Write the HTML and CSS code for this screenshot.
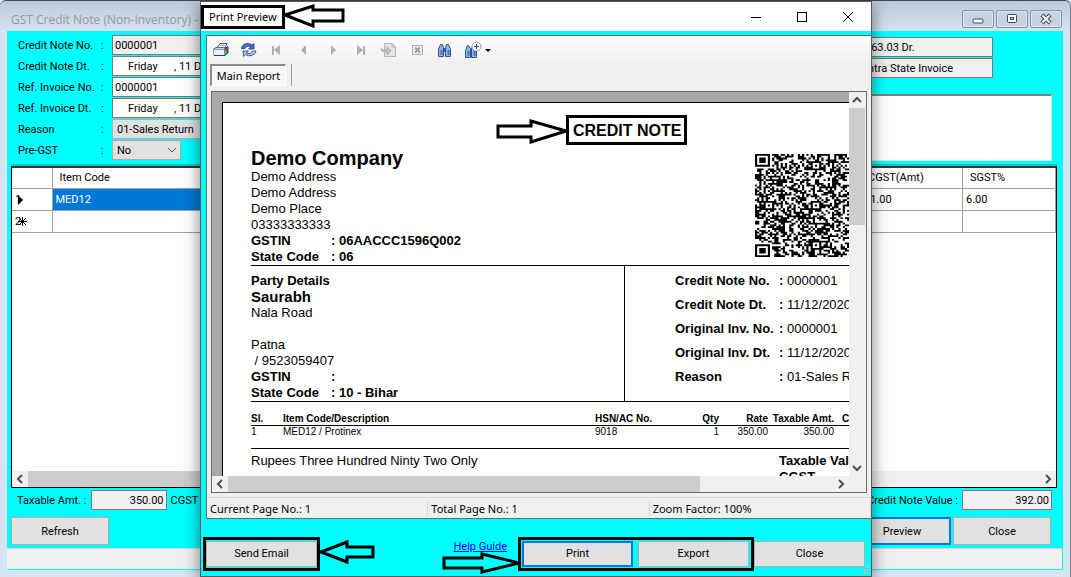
FILE: index.html
```html
<!DOCTYPE html>
<html lang="en">
<head>
    <meta charset="UTF-8">
    <meta name="viewport" content="width=device-width, initial-scale=1.0">
    <title>GST Credit Note - Print Preview</title>
    <link rel="stylesheet" href="styles.css">
</head>
<body>

    <!-- Credit note form (behind) -->
    <main class="form-window">
        <header class="form-title">
            <span>GST Credit Note (Non-Inventory) - T</span>
            <div class="window-buttons">
                <button aria-label="Minimize form"><svg width="14" height="12"><rect x="2" y="6" width="10" height="4" rx="1" fill="#fff" stroke="#44475a"/></svg></button>
                <button aria-label="Restore form"><svg width="14" height="12"><rect x="2.5" y="1.500" width="9" height="8" rx="1" fill="#fff" stroke="#44475a"/><rect x="5.500" y="4.500" width="3" height="2" fill="#c4d2e2" stroke="#44475a"/></svg></button>
                <button aria-label="Close form"><svg width="14" height="12"><path d="M3 2 L11 10 M11 2 L3 10" stroke="#44475a" stroke-width="4"/><path d="M3.500 2.500 L10.500 9.500 M10.500 2.500 L3.500 9.500" stroke="#fff" stroke-width="2"/></svg></button>
            </div>
        </header>

        <div class="form-body">
            <div class="form-top">
                <div class="fields">
                    <label for="cnNo">Credit Note No.</label><span>:</span>
                    <input id="cnNo" class="readonly" value="0000001" readonly>
                    <label for="cnDate">Credit Note Dt.</label><span>:</span>
                    <input id="cnDate" class="date" value="Friday      , 11 December">
                    <label for="refNo">Ref. Invoice No.</label><span>:</span>
                    <input id="refNo" value="0000001">
                    <label for="refDate">Ref. Invoice Dt.</label><span>:</span>
                    <input id="refDate" class="date" value="Friday      , 11 December">
                    <label for="reason">Reason</label><span>:</span>
                    <select id="reason"><option>01-Sales Return</option></select>
                    <label for="preGst">Pre-GST</label><span>:</span>
                    <div class="small-select">
                        <select id="preGst"><option>No</option></select>
                        <svg width="10" height="6"><path d="M1 1 L5 5 L9 1" fill="none" stroke="#555"/></svg>
                    </div>
                </div>
                <div class="party">
                    <input class="readonly" aria-label="Balance" value="963.03 Dr." readonly>
                    <input class="readonly" aria-label="Invoice type" value="Intra State Invoice" readonly>
                    <textarea aria-label="Remarks"></textarea>
                </div>
            </div>

            <div class="items">
                <table>
                    <colgroup><col class="col-mark"><col><col class="col-cgst"><col class="col-sgst"></colgroup>
                    <thead>
                        <tr><th></th><th>Item Code</th><th>CGST(Amt)</th><th>SGST%</th></tr>
                    </thead>
                    <tbody>
                        <tr><td class="mark">1<svg width="6" height="10"><path d="M0 0 L5 5 L0 10z"/></svg></td><td class="selected">MED12</td><td>21.00</td><td>6.00</td></tr>
                        <tr><td class="mark">2<svg width="9" height="9"><path d="M4.500 0v9M0 4.500h9M1 1l7 7M8 1l-7 7" stroke="#000"/></svg></td><td></td><td></td><td></td></tr>
                    </tbody>
                </table>
                <div class="hscroll">
                    <svg width="16" height="16"><path d="M10 4 L6 8 L10 12" fill="none" stroke="#505050" stroke-width="2"/></svg>
                    <div class="thumb"></div>
                    <svg width="16" height="16"><path d="M6 4 L10 8 L6 12" fill="none" stroke="#505050" stroke-width="2"/></svg>
                </div>
            </div>

            <div class="totals">
                <label for="taxable">Taxable Amt. :</label>
                <input id="taxable" class="readonly amount-sm" value="350.00" readonly>
                <span class="cgst">CGST</span>
                <label class="push" for="cnValue">Credit Note Value :</label>
                <input id="cnValue" class="readonly amount" value="392.00" readonly>
            </div>

            <div class="form-actions">
                <button class="btn">Refresh</button>
                <button class="btn default push">Preview</button>
                <button class="btn">Close</button>
            </div>
            <div class="form-status"></div>
        </div>
    </main>

    <!-- Print preview dialog -->
    <section class="dialog" role="dialog" aria-label="Print Preview">
        <header class="dialog-title">
            <span class="marked-title">Print Preview</span>
            <div class="dialog-buttons">
                <button aria-label="Minimize"><svg width="12" height="12"><path d="M1 6.500h10" stroke="#000"/></svg></button>
                <button aria-label="Maximize"><svg width="12" height="12"><rect x="1.500" y="1.500" width="9" height="9" fill="none" stroke="#000"/></svg></button>
                <button aria-label="Close preview"><svg width="12" height="12"><path d="M1 1 L11 11 M11 1 L1 11" stroke="#000"/></svg></button>
            </div>
        </header>

        <div class="viewer">
            <div class="toolbar">
                <button aria-label="Print report"><svg width="18" height="16"><path d="M5 6 L8 1.500 L15 1.500 L13 6z" fill="#fff" stroke="#34508e"/><path d="M8 3.500h5" stroke="#8a9bc4"/><path d="M1 7.500 L4 5.500 H15 L12 7.500z" fill="#c5d4ea" stroke="#54709c"/><path d="M12 7.500 L16 4.500 V11 L12 14z" fill="#2c58a0" stroke="#24408e"/><rect x="1.500" y="7.500" width="11" height="6" rx="1" fill="#e9f0fa" stroke="#7d9cc8"/><path d="M2 13.500h11" stroke="#24408e"/><rect x="12" y="7" width="3" height="2" fill="#e33"/><rect x="12" y="9" width="3" height="3" fill="#2c2"/></svg></button>
                <button aria-label="Refresh report"><svg width="18" height="16"><path d="M1.500 6.500 C2 2 8 0 12 3 L14 1.500 L14 7 L8.500 7 L10.500 5 C8 3.500 5.500 4.500 5 6.500z" fill="#3f6fb8" stroke="#1e3f80" stroke-width=".8"/><path d="M16 9 C15 13.500 9 15 5.500 12.500 L3.500 14.500 L3 9 L8.500 9 L6.500 11 C9 12 12 11.500 12.500 9z" fill="#a8c6ec" stroke="#1e3f80" stroke-width=".8"/></svg></button>
                <button aria-label="First page"><svg width="16" height="16"><path d="M4 4v9" stroke="#b0b0b0" stroke-width="2"/><path d="M11 3v10L5 8z" fill="#b0b0b0"/></svg></button>
                <button aria-label="Previous page"><svg width="16" height="16"><path d="M9 3v10L4 8z" fill="#b0b0b0"/></svg></button>
                <button aria-label="Next page"><svg width="16" height="16"><path d="M6 3v10l5-5z" fill="#b0b0b0"/></svg></button>
                <button aria-label="Last page"><svg width="16" height="16"><path d="M4 3v10l6-5z" fill="#b0b0b0"/><path d="M11 4v9" stroke="#b0b0b0" stroke-width="2"/></svg></button>
                <button aria-label="Go to page"><svg width="18" height="16"><path d="M4.500 1.500h8l3 3v10h-11z" fill="#e4e4e4" stroke="#b4b4b4"/><path d="M12 1.500v3.500h3" fill="none" stroke="#b4b4b4"/><path d="M1 7c0 3 2 3 6 3V13l4-4-4-4v3C4 8 3 8 1 7z" fill="#c4c4c4" stroke="#a4a4a4" stroke-width=".8"/></svg></button>
                <button aria-label="Close view"><svg width="16" height="16"><rect x="3.500" y="3.500" width="10" height="9" fill="#eee" stroke="#b0b0b0"/><path d="M6 5.500l5 5M11 5.500l-5 5" stroke="#a0a0a0" stroke-width="2"/></svg></button>
                <button aria-label="Find text"><svg width="16" height="16"><g fill="#8fb6e4" stroke="#2f5090"><path d="M1.500 14.500v-7l2-5h2l1 3v9z"/><path d="M13.500 14.500v-7l-2-5h-2l-1 3v9z"/><path d="M6.500 6.500h2v3h-2z" fill="#3c63a4"/></g><path d="M4.500 8v5M11.500 8v5" stroke="#4a76b8" stroke-width="2"/></svg></button>
                <button class="zoom" aria-label="Zoom"><svg width="28" height="18"><g fill="#8fb6e4" stroke="#2f5090"><path d="M1.500 16.500v-7l2-5h1l2 3v9z"/><path d="M12.500 16.500v-7l-2-5h-1l-2 3v9z"/></g><path d="M4.500 10v5M10.500 10v5" stroke="#4a76b8" stroke-width="2"/><circle cx="12.500" cy="5.500" r="4.500" fill="#f6f6f6" stroke="#9a9a9a"/><path d="M12.500 3v5M10 5.500h5" stroke="#2846a0"/><path d="M21 8h6l-3 3z"/></svg></button>
            </div>
            <div class="tabs"><button>Main Report</button><i></i></div>

            <div class="report-frame">
                <div class="report-view">
                    <article class="paper">
                        <h1>Demo Company</h1>
                        <p>Demo Address</p>
                        <p>Demo Address</p>
                        <p>Demo Place</p>
                        <p>03333333333</p>
                        <p class="pair"><b>GSTIN</b><b>: 06AACCC1596Q002</b></p>
                        <p class="pair"><b>State Code</b><b>: 06</b></p>
                        <svg class="qr" id="qr" viewBox="0 0 57 57" preserveAspectRatio="none" role="img" aria-label="QR code"><path id="qrPath"/></svg>

                        <div class="parties">
                            <div class="buyer">
                                <p><b>Party Details</b></p>
                                <h2>Saurabh</h2>
                                <p>Nala Road</p>
                                <p>&nbsp;</p>
                                <p>Patna</p>
                                <p>&nbsp;/ 9523059407</p>
                                <p class="pair"><b>GSTIN</b><b>:</b></p>
                                <p class="pair"><b>State Code</b><b>: 10 - Bihar</b></p>
                            </div>
                            <dl class="note-info">
                                <dt>Credit Note No.</dt><dd>0000001</dd>
                                <dt>Credit Note Dt.</dt><dd>11/12/2020</dd>
                                <dt>Original Inv. No.</dt><dd>0000001</dd>
                                <dt>Original Inv. Dt.</dt><dd>11/12/2020</dd>
                                <dt>Reason</dt><dd>01-Sales Return</dd>
                            </dl>
                        </div>

                        <table class="lines">
                            <colgroup><col class="c1"><col class="c2"><col class="c3"><col class="c4"><col class="c5"><col class="c6"><col></colgroup>
                            <thead>
                                <tr><th>Sl.</th><th>Item Code/Description</th><th>HSN/AC No.</th><th class="num">Qty</th><th class="num">Rate</th><th class="num">Taxable Amt.</th><th class="last">CGST</th></tr>
                            </thead>
                            <tbody>
                                <tr><td>1</td><td>MED12 / Protinex</td><td>9018</td><td class="num">1</td><td class="num">350.00</td><td class="num">350.00</td><td></td></tr>
                            </tbody>
                        </table>
                        <div class="sums">
                            <p>Rupees Three Hundred Ninty Two Only</p>
                            <div><b>Taxable Value</b><b>CGST</b></div>
                        </div>
                    </article>
                </div>
                <div class="vscroll">
                    <svg width="16" height="16"><path d="M4 10 L8 6 L12 10" fill="none" stroke="#505050" stroke-width="2"/></svg>
                    <div class="vthumb"></div>
                    <svg width="16" height="16"><path d="M4 6 L8 10 L12 6" fill="none" stroke="#505050" stroke-width="2"/></svg>
                </div>
                <div class="hscroll">
                    <svg width="16" height="16"><path d="M10 4 L6 8 L10 12" fill="none" stroke="#505050" stroke-width="2"/></svg>
                    <div class="track"><div class="thumb"></div></div>
                    <svg width="16" height="16"><path d="M6 4 L10 8 L6 12" fill="none" stroke="#505050" stroke-width="2"/></svg>
                </div>
            </div>

            <div class="statusbar">
                <span>Current Page No.: 1</span>
                <span>Total Page No.: 1</span>
                <span>Zoom Factor: 100%</span>
            </div>
        </div>

        <footer class="dialog-actions">
            <div class="marked"><button class="btn">Send Email</button></div>
            <a href="#">Help Guide</a>
            <div class="marked pair-marked">
                <button class="btn default">Print</button>
                <button class="btn">Export</button>
            </div>
            <button class="btn">Close</button>
            <svg class="grip" width="9" height="9"><path d="M6 0h2v2h-2zM3 3h2v2h-2zM6 3h2v2h-2zM0 6h2v2h-2zM3 6h2v2h-2zM6 6h2v2h-2z" fill="#b8c4c4"/></svg>
        </footer>

        <!-- Callouts drawn over the dialog -->
        <div class="heading-mark">CREDIT NOTE</div>
        <svg class="arrow arrow-title" width="64" height="26"><path d="M3 13 L31 4 V8 H61 V19 H31 V24z"/></svg>
        <svg class="arrow arrow-heading" width="74" height="26"><path d="M71 13 L36 3 V8 H3 V19 H36 V24z"/></svg>
        <svg class="arrow arrow-email" width="58" height="26"><path d="M3 13 L29 3 V8 H55 V18 H29 V23z"/></svg>
        <svg class="arrow arrow-print" width="82" height="26"><path d="M78 13 L41 4 V8 H3 V18 H41 V22z"/></svg>
    </section>

    <script>
        // Builds the QR modules: finder squares, alignment squares, then data
        var size = 57, seed = 1596, d = '';
        var finders = [[3, 3], [53, 3], [3, 53]];
        var aligns = [[28, 6], [6, 28], [28, 28], [50, 28], [28, 50], [50, 50]];

        function ring(x, y, c) {
            return Math.max(Math.abs(x - c[0]), Math.abs(y - c[1]));
        }

        function isDark(x, y) {
            var i, r;
            seed = (seed * 1103515245 + 12345) % 2147483648;
            for (i = 0; i < finders.length; i++) {
                r = ring(x, y, finders[i]);
                if (r <= 4) return r === 3 || r <= 1;
            }
            for (i = 0; i < aligns.length; i++) {
                r = ring(x, y, aligns[i]);
                if (r <= 2) return r !== 1;
            }
            if (x === 6 || y === 6) return (x + y) % 2 === 0;
            return (seed >> 16) % 100 < 51;
        }

        for (var y = 0; y < size; y++) {
            for (var x = 0; x < size; x++) {
                if (isDark(x, y)) d += 'M' + x + ' ' + y + 'h1v1h-1z';
            }
        }
        document.getElementById('qrPath').setAttribute('d', d);
    </script>

</body>
</html>
```

FILE: styles.css
```css
* {
    box-sizing: border-box;
}

body {
    margin: 0;
    height: 100vh;
    overflow: hidden;
    position: relative;
    font-family: Roboto, "Liberation Sans", sans-serif;
    font-size: 11px;
    color: #000;
    background: #d7e4f2;
}

button,
input,
select,
textarea {
    font: inherit;
    color: inherit;
    margin: 0;
    border-radius: 0;
}

svg {
    display: block;
    flex: none;
}

/* Form window */
.form-window {
    height: 100%;
    display: flex;
    flex-direction: column;
    padding: 0 7px 7px;
    border-top: 1px solid #3c4650;
    border-right: 1px solid #6f7c8a;
    border-radius: 6px 6px 0 0;
    background: linear-gradient(#bccadb, #d7e4f2 32px);
}

.form-title {
    height: 30px;
    display: flex;
    justify-content: space-between;
    align-items: center;
    padding: 6px 1px 0 4px;
    color: #999;
    font-family: "Open Sans", sans-serif;
    font-size: 12px;
}

.window-buttons {
    display: flex;
    gap: 2px;
}

.window-buttons button {
    width: 32px;
    height: 18px;
    display: flex;
    align-items: center;
    justify-content: center;
    padding: 0;
    border: 1px solid #8593a8;
    border-radius: 2px;
    background: #c4d2e2;
    box-shadow: inset 0 0 0 1px #dbe6f2;
}

.form-body {
    flex: 1;
    display: flex;
    flex-direction: column;
    background: #0ff;
}

.form-top {
    display: flex;
    justify-content: space-between;
    padding: 4px 11px 0;
}

.fields {
    display: grid;
    grid-template-columns: 83px 11px 200px;
    grid-auto-rows: 20px;
    row-gap: 1px;
    align-content: start;
    align-items: center;
}

.fields input,
.party input {
    height: 20px;
    border: 1px solid #7a7a7a;
    padding: 0 2px;
    background: #fff;
    min-width: 0;
}

.fields input.date {
    padding-left: 15px;
    white-space: pre;
}

.fields select {
    height: 20px;
    appearance: none;
    border: 1px solid #adadad;
    background: #e1e1e1;
    padding: 0 4px;
}

.small-select {
    display: grid;
    width: 69px;
    align-items: center;
}

.small-select select,
.small-select svg {
    grid-area: 1 / 1;
}

.small-select svg {
    justify-self: end;
    margin-right: 4px;
    pointer-events: none;
}

.form-body .readonly {
    background: #f0f0f0;
}

.party {
    width: 192px;
    display: flex;
    flex-direction: column;
    align-items: flex-start;
    gap: 1px;
    padding-top: 2px;
}

.party input {
    width: 133px;
    padding-left: 4px;
}

.party textarea {
    width: 100%;
    height: 67px;
    margin-top: 15px;
    resize: none;
    border: 1px solid #e3e3e3;
    border-top: 2px solid #808080;
    background: #fff;
}

.items {
    flex: 1;
    display: flex;
    flex-direction: column;
    justify-content: space-between;
    margin: 5px 6px 0 4px;
    border: 1px solid #000;
    border-top: 2px solid #333;
    background: #fff;
    box-shadow: 0 -2px 0 #0cc;
}

.items table {
    width: 100%;
    table-layout: fixed;
    border-collapse: collapse;
}

.col-mark { width: 40px; }
.col-cgst { width: 102px; }
.col-sgst { width: 93px; }

.items th,
.items td {
    height: 22px;
    padding: 0 3px;
    text-align: left;
    border-right: 1px solid #a0a0a0;
    border-bottom: 1px solid #a0a0a0;
}

.items th {
    height: 20px;
    padding: 0 7px;
    font-weight: normal;
}

.items .selected {
    background: #0078d7;
    color: #fff;
}

.mark svg {
    display: inline-block;
    vertical-align: middle;
    margin-left: -3px;
}

.hscroll {
    height: 16px;
    display: flex;
    background: #f0f0f0;
}

.items .thumb {
    flex: 1;
    margin-right: 200px;
    background: #cdcdcd;
}

.totals {
    display: flex;
    align-items: center;
    gap: 4px;
    height: 24px;
    padding: 0 11px 0 10px;
}

.totals input {
    height: 20px;
    text-align: right;
    border: 1px solid #7a7a7a;
    padding: 0 2px;
}

.amount-sm { width: 76px; }
.amount { width: 90px; }
.push { margin-left: auto; }

.btn {
    height: 28px;
    width: 98px;
    padding: 0;
    border: 1px solid #adadad;
    background: #e1e1e1;
}

.btn.default {
    border: 2px solid #0078d7;
}

.form-actions {
    display: flex;
    gap: 2px;
    padding: 5px 12px 3px 4px;
}

.form-status {
    height: 21px;
    margin: 0 1px 1px 0;
    border-top: 1px solid #d7d7d7;
    background: #f0f0f0;
}

/* Preview dialog */
.dialog {
    position: absolute;
    top: 1px;
    left: 200px;
    right: 199px;
    bottom: 0;
    display: flex;
    flex-direction: column;
    border: 1px solid #5a5a5a;
    background: #0ff;
    box-shadow: 0 4px 16px rgba(0, 0, 0, 0.5);
}

.dialog-title {
    height: 29px;
    display: flex;
    justify-content: space-between;
    align-items: center;
    background: #fff;
    font-family: "Noto Sans", sans-serif;
}

.marked-title {
    padding: 0 5px;
    line-height: 18px;
    border: 3px solid #000;
}

.dialog-buttons {
    display: flex;
}

.dialog-buttons button {
    width: 46px;
    height: 29px;
    display: flex;
    align-items: center;
    justify-content: center;
    padding: 0;
    border: 0;
    background: none;
}

.viewer {
    flex: 1;
    display: flex;
    flex-direction: column;
    min-height: 0;
    margin: 4px 0 0 5px;
    border: 1px solid #696969;
    border-right: 0;
    background: #f0f0f0;
    font-family: "Noto Sans", sans-serif;
}

.toolbar {
    height: 28px;
    display: flex;
    align-items: center;
    gap: 10px;
    padding: 0 5px;
    background: linear-gradient(#fdfdfd, #f0f0f0);
}

.toolbar button {
    width: 18px;
    height: 20px;
    display: flex;
    align-items: center;
    justify-content: center;
    padding: 0;
    border: 0;
    background: none;
}

.toolbar .zoom {
    width: 28px;
}

.tabs {
    display: flex;
    gap: 5px;
    padding: 0 3px;
    height: 22px;
}

.tabs button {
    width: 76px;
    padding: 0;
    border: 1px solid #fff;
    border-top: 2px solid #8c8c8c;
    border-left: 2px solid #8c8c8c;
    background: #f8f8f8;
}

.tabs i {
    border-left: 1px solid #a0a0a0;
}

.report-frame {
    flex: 1;
    min-height: 0;
    display: grid;
    grid-template-columns: 1fr 17px;
    grid-template-rows: 1fr 16px;
    margin: 5px 4px 4px;
    border: 1px solid #696969;
    background: #f0f0f0;
}

.report-view {
    min-width: 0;
    min-height: 0;
    overflow: hidden;
    padding: 10px 0 0 10px;
    background: #a9a9a9;
}

/* The sheet keeps its printed width and is cut off by the view */
.paper {
    position: relative;
    width: 780px;
    height: 1000px;
    padding: 44px 28px;
    border: 1px solid #000;
    background: #fff;
    font-family: "Liberation Sans", sans-serif;
    font-size: 13px;
    line-height: 16px;
}

.paper h1 {
    margin: 0;
    font-size: 20px;
    line-height: 22px;
}

.paper h2 {
    margin: 0;
    font-size: 15px;
    line-height: 16px;
}

.paper p {
    margin: 0;
}

.pair {
    display: grid;
    grid-template-columns: 80px auto;
    justify-content: start;
}

.qr {
    position: absolute;
    top: 51px;
    left: 532px;
    width: 122px;
    height: 103px;
}

.parties {
    display: flex;
    border-top: 1px solid #000;
    border-bottom: 1px solid #000;
}

.buyer {
    width: 374px;
    padding: 7px 0 0;
    border-right: 1px solid #000;
}

.note-info {
    display: grid;
    grid-template-columns: 104px 120px;
    grid-auto-rows: 24px;
    line-height: 24px;
    margin: 3px 0 0 50px;
}

.note-info dt {
    font-weight: bold;
}

.note-info dd {
    margin: 0;
}

.note-info dd::before {
    content: ": ";
    font-weight: bold;
}

.lines {
    width: 100%;
    margin-top: 11px;
    table-layout: fixed;
    border-collapse: collapse;
    font-size: 10px;
    line-height: 12px;
}

.c1 { width: 32px; }
.c2 { width: 312px; }
.c3 { width: 70px; }
.c4 { width: 54px; }
.c5 { width: 49px; }
.c6 { width: 66px; }

.lines th,
.lines td {
    padding: 0;
    text-align: left;
    white-space: nowrap;
}

.lines th {
    border-bottom: 1px solid #000;
}

.lines td {
    height: 23px;
    vertical-align: top;
    border-bottom: 1px solid #000;
}

.lines .num {
    text-align: right;
}

.lines .last {
    padding-left: 8px;
}

.sums {
    display: grid;
    grid-template-columns: 528px auto;
    padding-top: 4px;
}

.sums b {
    display: block;
}

.vscroll {
    display: flex;
    flex-direction: column;
    background: #f0f0f0;
}

.vthumb {
    height: 117px;
    margin: 0 1px 0 0;
    background: #cdcdcd;
}

.vscroll svg:last-child {
    margin-top: auto;
}

.track {
    flex: 1;
}

.track .thumb {
    width: 78%;
    height: 100%;
    background: #cdcdcd;
}

.statusbar {
    height: 21px;
    display: grid;
    grid-template-columns: 1fr 1fr 1fr;
    align-items: center;
    border-top: 1px solid #d7d7d7;
}

.statusbar span {
    padding-left: 3px;
    border-right: 1px solid #d7d7d7;
}

.dialog-actions {
    position: relative;
    height: 57px;
    display: flex;
    align-items: center;
    padding: 12px 6px 0 2px;
}

.dialog-actions .btn {
    width: 111px;
    height: 26px;
}

.marked {
    padding: 1px 0;
    border: 3px solid #000;
}

.dialog-actions a {
    margin: 0 11px 14px auto;
    color: #00f;
}

.dialog-actions .pair-marked {
    display: flex;
    gap: 5px;
    padding: 1px 2px 1px 1px;
}

.grip {
    position: absolute;
    right: 1px;
    bottom: 1px;
}

/* Callouts */
.heading-mark {
    position: absolute;
    top: 113px;
    left: 365px;
    padding: 1px 3px 0 4px;
    border: 3px solid #000;
    font: bold 16px/23px "Liberation Sans", sans-serif;
}

.arrow {
    position: absolute;
    fill: none;
    stroke: #000;
    stroke-width: 3;
}

.arrow-title { top: 0; left: 81px; }
.arrow-heading { top: 116px; left: 294px; }
.arrow-email { bottom: 11px; left: 117px; }
.arrow-print { bottom: 0; left: 240px; }
```
